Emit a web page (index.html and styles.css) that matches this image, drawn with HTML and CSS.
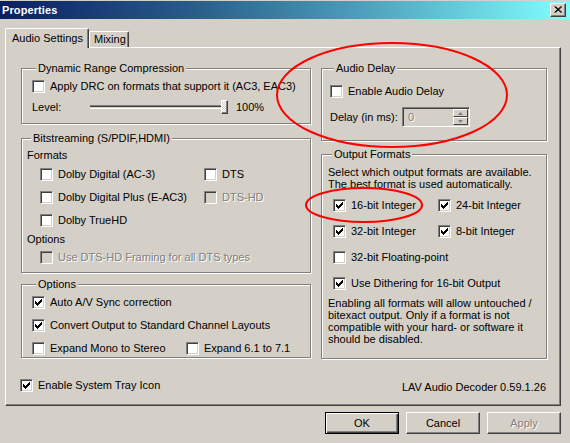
FILE: index.html
```html
<!DOCTYPE html>
<html>
<head>
<meta charset="utf-8">
<title>Properties</title>
<link rel="stylesheet" href="styles.css">
</head>
<body>
<div class="window">
  <div class="titlebar">
    <span class="title">Properties</span>
    <span class="close-btn"><svg width="8" height="7" viewBox="0 0 8 7"><path d="M0.5 0.5L7 6.5M1.5 0.5L8 6.5M7 0.5L0.5 6.5M8 0.5L1.5 6.5" stroke="#000" stroke-width="1" fill="none"/></svg></span>
  </div>

  <div class="tabs">
    <div class="tab active">Audio Settings</div>
    <div class="tab">Mixing</div>
  </div>

  <div class="panel">
    <div class="columns">
      <div class="col col-left">
        <div class="group g-drc">
          <div class="gtitle">Dynamic Range Compression</div>
          <div class="chk drc-chk"><span class="cb"></span><span>Apply DRC on formats that support it (AC3, EAC3)</span></div>
          <div class="level-row">
            <span class="level-label">Level:</span>
            <div class="slider"><div class="track"></div><div class="thumb"></div></div>
            <span class="level-val">100%</span>
          </div>
        </div>

        <div class="group g-bits">
          <div class="gtitle">Bitstreaming (S/PDIF,HDMI)</div>
          <div class="sublabel first">Formats</div>
          <div class="fmt-grid">
            <div class="chk"><span class="cb"></span><span>Dolby Digital (AC-3)</span></div>
            <div class="chk"><span class="cb"></span><span>DTS</span></div>
            <div class="chk"><span class="cb"></span><span>Dolby Digital Plus (E-AC3)</span></div>
            <div class="chk disabled"><span class="cb"></span><span>DTS-HD</span></div>
            <div class="chk"><span class="cb"></span><span>Dolby TrueHD</span></div>
          </div>
          <div class="sublabel">Options</div>
          <div class="chk disabled framing"><span class="cb"></span><span>Use DTS-HD Framing for all DTS types</span></div>
        </div>

        <div class="group g-opts">
          <div class="gtitle">Options</div>
          <div class="opt-list">
            <div class="chk"><span class="cb"><svg width="11" height="11" viewBox="1 1 11 11"><path d="M3.5 5v3M4.5 6v3M5.5 7v3M6.5 6v3M7.5 5v3M8.5 4v3M9.5 3v3" stroke="#000" stroke-width="1"/></svg></span><span>Auto A/V Sync correction</span></div>
            <div class="chk"><span class="cb"><svg width="11" height="11" viewBox="1 1 11 11"><path d="M3.5 5v3M4.5 6v3M5.5 7v3M6.5 6v3M7.5 5v3M8.5 4v3M9.5 3v3" stroke="#000" stroke-width="1"/></svg></span><span>Convert Output to Standard Channel Layouts</span></div>
            <div class="opt-pair">
              <div class="chk mono"><span class="cb"></span><span>Expand Mono to Stereo</span></div>
              <div class="chk"><span class="cb"></span><span>Expand 6.1 to 7.1</span></div>
            </div>
          </div>
        </div>
      </div>

      <div class="col col-right">
        <div class="group g-delay">
          <div class="gtitle">Audio Delay</div>
          <div class="chk delay-chk"><span class="cb"></span><span>Enable Audio Delay</span></div>
          <div class="delay-row">
            <span class="delay-label">Delay (in ms):</span>
            <div class="spin-edit">
              <span class="spin-text">0</span>
              <div class="spin-btns">
                <span class="spin-btn"><svg width="5" height="3" viewBox="0 0 5 3"><path d="M2.5 0L5 3H0z" fill="#808080"/></svg></span>
                <span class="spin-btn"><svg width="5" height="3" viewBox="0 0 5 3"><path d="M0 0H5L2.5 3z" fill="#808080"/></svg></span>
              </div>
            </div>
          </div>
        </div>

        <div class="group g-out">
          <div class="gtitle">Output Formats</div>
          <p class="note first-note">Select which output formats are available.<br>The best format is used automatically.</p>
          <div class="out-grid">
            <div class="chk"><span class="cb"><svg width="11" height="11" viewBox="1 1 11 11"><path d="M3.5 5v3M4.5 6v3M5.5 7v3M6.5 6v3M7.5 5v3M8.5 4v3M9.5 3v3" stroke="#000" stroke-width="1"/></svg></span><span>16-bit Integer</span></div>
            <div class="chk"><span class="cb"><svg width="11" height="11" viewBox="1 1 11 11"><path d="M3.5 5v3M4.5 6v3M5.5 7v3M6.5 6v3M7.5 5v3M8.5 4v3M9.5 3v3" stroke="#000" stroke-width="1"/></svg></span><span>24-bit Integer</span></div>
            <div class="chk"><span class="cb"><svg width="11" height="11" viewBox="1 1 11 11"><path d="M3.5 5v3M4.5 6v3M5.5 7v3M6.5 6v3M7.5 5v3M8.5 4v3M9.5 3v3" stroke="#000" stroke-width="1"/></svg></span><span>32-bit Integer</span></div>
            <div class="chk"><span class="cb"><svg width="11" height="11" viewBox="1 1 11 11"><path d="M3.5 5v3M4.5 6v3M5.5 7v3M6.5 6v3M7.5 5v3M8.5 4v3M9.5 3v3" stroke="#000" stroke-width="1"/></svg></span><span>8-bit Integer</span></div>
            <div class="chk span2"><span class="cb"></span><span>32-bit Floating-point</span></div>
            <div class="chk span2"><span class="cb"><svg width="11" height="11" viewBox="1 1 11 11"><path d="M3.5 5v3M4.5 6v3M5.5 7v3M6.5 6v3M7.5 5v3M8.5 4v3M9.5 3v3" stroke="#000" stroke-width="1"/></svg></span><span>Use Dithering for 16-bit Output</span></div>
          </div>
          <p class="note second-note">Enabling all formats will allow untouched /<br>bitexact output. Only if a format is not<br>compatible with your hard- or software it<br>should be disabled.</p>
        </div>
      </div>
    </div>

    <div class="footer">
      <div class="chk"><span class="cb"><svg width="11" height="11" viewBox="1 1 11 11"><path d="M3.5 5v3M4.5 6v3M5.5 7v3M6.5 6v3M7.5 5v3M8.5 4v3M9.5 3v3" stroke="#000" stroke-width="1"/></svg></span><span>Enable System Tray Icon</span></div>
      <span class="version">LAV Audio Decoder 0.59.1.26</span>
    </div>
  </div>

  <div class="buttons">
    <span class="btn default">OK</span>
    <span class="btn">Cancel</span>
    <span class="btn disabled">Apply</span>
  </div>

  <svg class="annotations" width="570" height="443" viewBox="0 0 570 443">
    <ellipse cx="392" cy="95" rx="115" ry="52" fill="none" stroke="#ff0000" stroke-width="2"/>
    <ellipse cx="364" cy="205" rx="58" ry="17" fill="none" stroke="#ff0000" stroke-width="2"/>
  </svg>
</div>
</body>
</html>
```

FILE: styles.css
```css
* { box-sizing: border-box; }

html, body {
  margin: 0;
  padding: 0;
  background: #d4d0c8;
}

body {
  font-family: "Liberation Sans", Arial, sans-serif;
  font-size: 11px;
  line-height: 13px;
  color: #000;
}

.window {
  position: relative;
  width: 570px;
  height: 443px;
  overflow: hidden;
  background: #d4d0c8;
  padding-top: 1px;
}

/* title bar */
.titlebar {
  height: 18px;
  display: flex;
  align-items: center;
  justify-content: space-between;
  padding: 0 4px 0 2px;
  background: linear-gradient(90deg, #0a1e62 0%, #2a5f8a 35%, #4a9cb8 62%, #80ffff 100%);
}

.title {
  color: #fff;
  font-weight: bold;
  font-size: 11px;
  letter-spacing: 0.1px;
}

.close-btn {
  width: 16px;
  height: 14px;
  display: flex;
  align-items: center;
  justify-content: center;
  background: #d4d0c8;
  border: 1px solid;
  border-color: #fff #404040 #404040 #fff;
  box-shadow: inset -1px -1px #808080;
  padding: 0 0 1px 0;
}

.close-btn svg { display: block; }

/* tabs */
.tabs {
  display: flex;
  align-items: flex-end;
  height: 19px;
  margin: 9px 0 0 5px;
  position: relative;
  z-index: 1;
}

.tab {
  background: #d4d0c8;
  border-top: 1px solid #fff;
  border-left: 1px solid #fff;
  border-right: 1px solid #404040;
  box-shadow: inset -1px 0 #808080;
  border-radius: 2px 2px 0 0;
  height: 16px;
  width: 40px;
  padding: 1px 0 0 4px;
  white-space: nowrap;
}

.tab.active {
  width: 84px;
  height: 20px;
  margin-bottom: -1px;
  padding: 3px 0 0 6px;
}

/* panel */
.panel {
  margin-left: 5px;
  width: 556px;
  height: 359px;
  border: 1px solid;
  border-color: #fff #404040 #404040 #fff;
  box-shadow: inset -1px -1px #808080;
}

.columns {
  display: flex;
  gap: 10px;
  padding: 20px 0 0 15px;
}

.col { display: flex; flex-direction: column; }
.col-left { width: 290px; }
.col-right { width: 226px; }

/* group boxes */
.group {
  border: 1px solid #808080;
  box-shadow: inset 1px 1px #fff, 1px 1px #fff;
}

.gtitle {
  width: fit-content;
  height: 13px;
  margin: -7px 0 0 4px;
  padding: 0 2px;
  background: #d4d0c8;
  white-space: nowrap;
}

.g-drc { height: 56px; padding-left: 10px; }
.g-bits { height: 135px; margin-top: 14px; padding-left: 5px; }
.g-opts { height: 74px; margin-top: 11px; padding-left: 10px; }
.g-delay { height: 73px; padding-left: 8px; }
.g-out { height: 205px; margin-top: 13px; padding-left: 6px; }

/* checkboxes */
.chk {
  display: flex;
  align-items: center;
  gap: 5px;
  height: 13px;
  white-space: nowrap;
}

.cb {
  flex: none;
  width: 13px;
  height: 13px;
  border: 1px solid;
  border-color: #808080 #fff #fff #808080;
  box-shadow: inset 1px 1px #404040, inset -1px -1px #d4d0c8;
  background: #fff;
}

.cb svg { display: block; }

.chk.disabled { color: #808080; text-shadow: 1px 1px #fff; }
.chk.disabled .cb { background: #d4d0c8; }

/* DRC */
.drc-chk { margin-top: 5px; }

.level-row {
  display: flex;
  align-items: center;
  height: 14px;
  margin-top: 7px;
}

.level-label { width: 58px; }

.slider {
  width: 138px;
  height: 14px;
  display: flex;
  align-items: center;
}

.track {
  flex: 1;
  height: 4px;
  border-top: 1px solid #808080;
  border-bottom: 1px solid #fff;
  background: linear-gradient(#404040 0 1px, #d4d0c8 1px);
}

.thumb {
  width: 7px;
  height: 14px;
  border: 1px solid;
  border-color: #fff #404040 #404040 #fff;
  box-shadow: inset -1px -1px #808080;
  background: repeating-conic-gradient(#fff 0 25%, #d4d0c8 0 50%) 0 0 / 2px 2px;
}

.level-val { margin-left: 8px; }

/* bitstreaming */
.sublabel { height: 13px; margin-top: 6px; }
.sublabel.first { margin-top: 4px; }

.fmt-grid {
  display: grid;
  grid-template-columns: 164px auto;
  row-gap: 10px;
  margin: 6px 0 0 13px;
}

.framing { margin: 5px 0 0 13px; }

/* options */
.opt-list {
  display: flex;
  flex-direction: column;
  gap: 10px;
  margin-top: 5px;
}

.opt-pair { display: flex; }
.opt-pair .mono { width: 154px; }

/* audio delay */
.delay-chk { margin-top: 10px; }

.delay-row {
  display: flex;
  align-items: center;
  margin-top: 9px;
  height: 20px;
}

.delay-label { width: 72px; }

.spin-edit {
  width: 68px;
  height: 20px;
  display: flex;
  justify-content: space-between;
  border: 1px solid;
  border-color: #808080 #fff #fff #808080;
  box-shadow: inset 1px 1px #404040, inset -1px -1px #d4d0c8;
  padding: 1px;
  background: #d4d0c8;
}

.spin-text {
  color: #808080;
  padding: 2px 0 0 4px;
  text-shadow: 1px 1px #fff;
}

.spin-btns {
  display: flex;
  flex-direction: column;
  width: 15px;
}

.spin-btn {
  height: 8px;
  display: flex;
  align-items: center;
  justify-content: center;
  border: 1px solid;
  border-color: #fff #404040 #404040 #fff;
  background: #d4d0c8;
}

.spin-btn svg { display: block; }

/* output formats */
.note {
  margin: 0;
  line-height: 12.3px;
}

.first-note { margin-top: 5px; }
.second-note { margin-top: 7px; }

.out-grid {
  display: grid;
  grid-template-columns: 105px auto;
  row-gap: 13px;
  margin: 8px 0 0 5px;
}

.span2 { grid-column: 1 / span 2; }

/* footer */
.footer {
  display: flex;
  justify-content: space-between;
  align-items: center;
  margin-top: 18px;
  padding: 0 14px;
}

.version { padding-top: 4px; }

/* buttons */
.buttons {
  display: flex;
  justify-content: flex-end;
  gap: 7px;
  margin-top: 6px;
  padding-right: 9px;
}

.btn {
  width: 74px;
  height: 22px;
  display: flex;
  align-items: center;
  justify-content: center;
  background: #d4d0c8;
  border: 1px solid;
  border-color: #fff #404040 #404040 #fff;
  box-shadow: inset -1px -1px #808080;
}

.btn.default {
  border-color: #000;
  box-shadow: inset 1px 1px #fff, inset -1px -1px #404040, inset -2px -2px #808080;
}

.btn.disabled { color: #808080; text-shadow: 1px 1px #fff; }

/* annotation overlay */
.annotations {
  position: absolute;
  left: 0;
  top: 0;
  pointer-events: none;
}
```
